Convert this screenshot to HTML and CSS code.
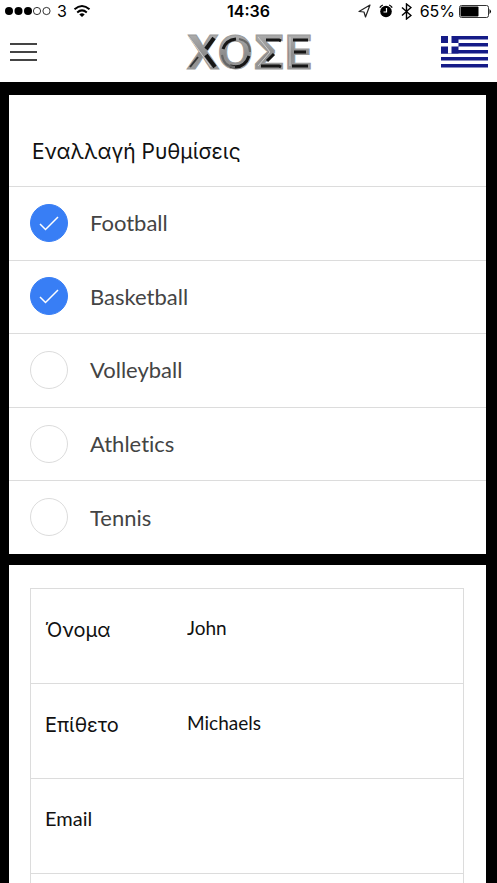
FILE: index.html
```html
<!DOCTYPE html>
<html lang="el">
<head>
<meta charset="utf-8">
<meta name="viewport" content="width=device-width, initial-scale=1">
<title>ΧΟΣΕ</title>
<link rel="stylesheet" href="styles.css">
</head>
<body>
<div class="status">
  <div class="status-left">
    <svg class="signal" width="46" height="10" viewBox="0 0 46 10" aria-hidden="true">
      <circle cx="4" cy="5" r="4"/><circle cx="13.500" cy="5" r="4"/><circle cx="23" cy="5" r="4"/>
      <g fill="none" stroke="#000" stroke-width=".8"><circle cx="32" cy="5" r="3.600"/><circle cx="41.500" cy="5" r="3.600"/></g>
    </svg>
    <span>3</span>
    <svg class="wifi" width="18" height="14" viewBox="0 0 18 14" aria-hidden="true">
      <g fill="none" stroke="#000" stroke-width="2"><path d="M1.500 5.200Q9-1.300 16.500 5.200"/><path d="M4.200 8.400Q9 4.400 13.800 8.400"/></g>
      <path d="M6.300 10.400Q9 8.300 11.700 10.400L9 13z"/>
    </svg>
  </div>
  <time class="clock">14:36</time>
  <div class="status-right">
    <svg width="13" height="14" viewBox="0 0 13 14" aria-hidden="true"><path d="M12 1L1 7.500L6 8L7.500 13z" fill="none" stroke="#222" stroke-width="1.200" stroke-linejoin="round"/></svg>
    <svg width="14" height="14" viewBox="0 0 14 14" aria-hidden="true">
      <circle cx="7" cy="7.500" r="5.800"/>
      <path d="M.8 3.600Q1.800 1.800 3.800 1M13.200 3.600Q12.200 1.800 10.200 1" stroke="#000" stroke-width="1.300" fill="none"/>
      <path d="M7.500 4V8H4.500" fill="none" stroke="#fff" stroke-width="1.200"/>
    </svg>
    <svg width="11" height="17" viewBox="0 0 11 17" aria-hidden="true"><path d="M1 4.500L10 12.500L5.500 16V1L10 4.500L1 12.500" fill="none" stroke="#000" stroke-width="1.400"/></svg>
    <span>65%</span>
    <svg class="battery" width="33" height="13" viewBox="0 0 33 13" aria-hidden="true">
      <rect x=".5" y=".5" width="29" height="12" rx="2" fill="none" stroke="#333"/>
      <rect x="1.500" y="1.500" width="18" height="10" rx="1"/>
      <path d="M30.500 4Q33.500 6.500 30.500 9z"/>
    </svg>
  </div>
</div>

<header class="bar">
  <button class="menu" type="button" aria-label="Menu"><i></i><i></i><i></i></button>
  <svg class="logo" width="130" height="58" viewBox="0 -9 130 58" role="img" aria-label="ΧΟΣΕ">
    <defs>
      <linearGradient id="metal" x1="0" y1="0" x2="0" y2="1">
        <stop offset=".1" stop-color="#b4b4b4"/><stop offset=".55" stop-color="#8c8c8c"/><stop offset="1" stop-color="#a0a0a0"/>
      </linearGradient>
    </defs>
    <text class="logo-text" x="2" y="37" fill="url(#metal)" stroke="#999">ΧΟΣΕ</text>
    <g fill="none" stroke="#161616" stroke-width="3">
      <path d="M22 17L30 6M22 23L31 35" stroke-width="4"/>
      <path d="M6 35L14 25" stroke="#333" stroke-width="2"/>
      <path d="M39 17Q42 8 52 7M46 34Q60 38 65 24" stroke-width="3"/>
      <path d="M38 23Q40 35 51 35M55 7Q66 9 66 20" stroke="#666" stroke-width="2"/>
      <path d="M82 8H95L97 9M90 22L83 29M77 34H95L97 35M109 8H124M110 20H122M108 34H124"/>
      <path d="M5 5L27 35M74 5L86 20L74 34M106 5V34" stroke="#ccc" stroke-width="1"/>
    </g>
  </svg>
  <button class="language" type="button" aria-label="Ελληνικά">
    <svg width="47" height="32" viewBox="0 0 47 32" aria-hidden="true">
      <path fill="#151b87" d="M0 0H47V3.500H0zM0 7H47V10.500H0zM0 14H47V17.500H0zM0 21H47V24.500H0zM0 28H47V31.500H0z"/>
      <path fill="#151b87" d="M0 0H17.500V17.500H0z"/>
      <path fill="#fff" d="M7 0H10.500V17.500H7zM0 7H17.500V10.500H0z"/>
    </svg>
  </button>
</header>

<main>
  <section class="panel">
    <h1>Εναλλαγή Ρυθμίσεις</h1>
    <div class="options">
      <label class="option"><span class="tick"><input type="checkbox" checked><svg viewBox="0 0 38 38" aria-hidden="true"><path d="M10 20L15.500 25.500L28 13"/></svg></span>Football</label>
      <label class="option"><span class="tick"><input type="checkbox" checked><svg viewBox="0 0 38 38" aria-hidden="true"><path d="M10 20L15.500 25.500L28 13"/></svg></span>Basketball</label>
      <label class="option"><span class="tick"><input type="checkbox"></span>Volleyball</label>
      <label class="option"><span class="tick"><input type="checkbox"></span>Athletics</label>
      <label class="option"><span class="tick"><input type="checkbox"></span>Tennis</label>
    </div>
  </section>
  <section class="panel details">
    <form class="fields">
      <div class="field"><label for="first" class="greek">Όνομα</label><input id="first" type="text" value="John"></div>
      <div class="field"><label for="last" class="greek">Επίθετο</label><input id="last" type="text" value="Michaels"></div>
      <div class="field"><label for="email">Email</label><input id="email" type="email"></div>
    </form>
  </section>
</main>
</body>
</html>
```
FILE: styles.css
```css
* { box-sizing: border-box; }
html { background: #000; }
body {
  margin: 0;
  min-height: 100vh;
  display: flex;
  flex-direction: column;
  color: #111;
  font-family: Lato, Inter, sans-serif;
  font-variant-ligatures: none;
}
button { border: 0; padding: 0; background: none; }
svg { display: block; flex: none; }

.status {
  flex: none;
  display: grid;
  grid-template-columns: 1fr auto 1fr;
  align-items: center;
  height: 22px;
  padding: 0 5px;
  background: #fff;
  color: #000;
  font: 16px/22px Inter, sans-serif;
}
.status-left, .status-right { display: flex; align-items: center; gap: 6px; }
.status-right { justify-content: flex-end; gap: 8px; }
.status-right span { margin-right: -4px; }
.clock { font-weight: 600; }

.bar {
  flex: none;
  display: grid;
  grid-template-columns: 1fr auto 1fr;
  align-items: center;
  height: 60px;
  padding: 0 9px 0 10px;
  background: #fff;
}
.menu { display: grid; gap: 6px; width: 27px; }
.menu i { height: 2px; background: #444; }
.language { justify-self: end; }
.logo-text { font: bold 46px Inter, sans-serif; }

main {
  flex: 1;
  display: grid;
  grid-template-rows: auto 1fr;
  gap: 11px;
  padding: 13px 11px 0 9px;
}
.panel { background: #fff; }
h1 {
  margin: 0;
  padding: 42px 23px 19px;
  font: 400 21px/30px Inter, sans-serif;
}
.options { display: grid; grid-auto-rows: 1fr; height: 368px; }
.option {
  display: flex;
  align-items: center;
  gap: 22px;
  padding: 0 21px 1px;
  border-top: 1px solid #dcdcdc;
  color: #444;
  font-size: 22px;
}
.tick { display: grid; width: 38px; height: 38px; }
.tick > * { grid-area: 1 / 1; }
.tick input {
  appearance: none;
  width: 38px;
  height: 38px;
  margin: 0;
  border: 1px solid #dcdcdc;
  border-radius: 50%;
}
.tick input:checked { border-color: #387ef5; background: #387ef5; }
.tick svg { z-index: 1; pointer-events: none; fill: none; stroke: #fff; stroke-width: 1.5; }

.details { display: grid; padding: 23px 22px 0 21px; }
.fields { border: 1px solid #dcdcdc; border-bottom: 0; }
.field {
  display: grid;
  grid-template-columns: 142px 1fr;
  align-items: start;
  height: 95px;
  padding: 24px 14px 0;
  border-bottom: 1px solid #dcdcdc;
}
.field label { font: 20px/30px Lato, sans-serif; }
.field .greek { font: 20px/34px Inter, sans-serif; }
.field input {
  min-width: 0;
  width: 100%;
  height: 30px;
  padding: 0;
  border: 0;
  outline: 0;
  background: none;
  color: #111;
  font: 19px/30px Lato, sans-serif;
}
```
